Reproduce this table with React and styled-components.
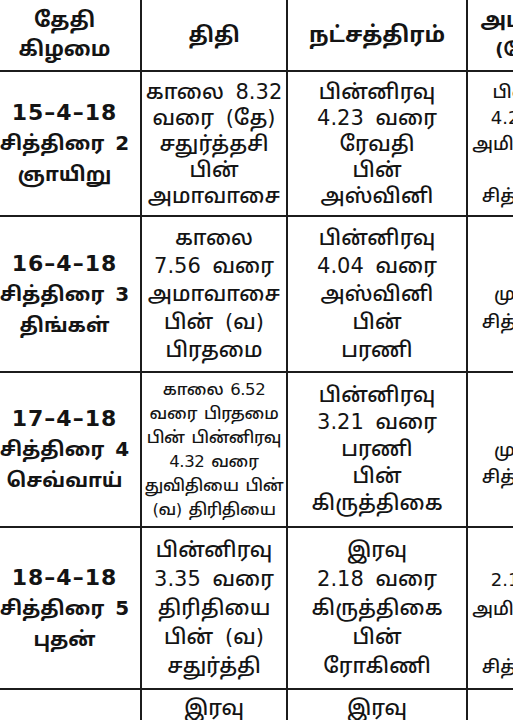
import styled, { createGlobalStyle } from 'styled-components';

const GlobalStyle = createGlobalStyle`
    html, body {
        margin: 0;
        padding: 0;
        background: #fff;
    }
    body {
        font-family: "DejaVu Sans", "Noto Sans Tamil", "Lohit Tamil", "Noto Sans", sans-serif;
        color: #141414;
    }
`;

const Page = styled.div`
    width: 513px;
    height: 720px;
    overflow: hidden;
    background: #fff;
`;

const Table = styled.div`
    margin-left: -11px;
    width: 632px;
`;

const Row = styled.div`
    display: grid;
    grid-template-columns: 153px 146px 180px 151px;
    height: ${p => p.h}px;
    border-bottom: 2px solid #1c1c1c;
    box-sizing: border-box;
`;

const Cell = styled.div`
    display: flex;
    flex-direction: column;
    align-items: center;
    justify-content: center;
    border-right: 2px solid #1c1c1c;
    text-align: center;
    white-space: nowrap;
    font-size: ${p => p.size || 21}px;
    line-height: ${p => p.lh || 26}px;
    font-weight: ${p => (p.bold ? 700 : 500)};
    letter-spacing: ${p => p.ls || 0}px;
    word-spacing: ${p => (p.ws === undefined ? 5 : p.ws)}px;
`;

const DateLine = styled.span`
    font-size: ${p => (p.num ? 22 : 20)}px;
    letter-spacing: ${p => (p.num ? 1 : 0)}px;
    word-spacing: ${p => (p.num ? 0 : 4)}px;
`;

const rows = [
    {
        h: 145,
        date: ['15–4–18', 'சித்திரை 2', 'ஞாயிறு'],
        thithi: ['காலை 8.32', 'வரை (தே)', 'சதுர்த்தசி', 'பின்', 'அமாவாசை'],
        star: ['பின்னிரவு', '4.23 வரை', 'ரேவதி', 'பின்', 'அஸ்வினி'],
        yogam: ['பின்னிரவு', '4.23 வரை', 'அமிர்தயோகம்', 'பின்', 'சித்தயோகம்'],
    },
    {
        h: 156,
        date: ['16–4–18', 'சித்திரை 3', 'திங்கள்'],
        thithi: ['காலை', '7.56 வரை', 'அமாவாசை', 'பின் (வ)', 'பிரதமை'],
        thLh: 28,
        star: ['பின்னிரவு', '4.04 வரை', 'அஸ்வினி', 'பின்', 'பரணி'],
        starLh: 28,
        yogam: ['நாள்', 'முழுவதும்', 'சித்தயோகம்'],
    },
    {
        h: 155,
        date: ['17–4–18', 'சித்திரை 4', 'செவ்வாய்'],
        thithi: ['காலை 6.52', 'வரை பிரதமை', 'பின் பின்னிரவு', '4.32 வரை', 'துவிதியை பின்', '(வ) திரிதியை'],
        thSize: 16.5,
        thLh: 24,
        thLs: -0.4,
        thWs: 2,
        star: ['பின்னிரவு', '3.21 வரை', 'பரணி', 'பின்', 'கிருத்திகை'],
        starLh: 27,
        yogam: ['நாள்', 'முழுவதும்', 'சித்தயோகம்'],
    },
    {
        h: 162,
        date: ['18–4–18', 'சித்திரை 5', 'புதன்'],
        thithi: ['பின்னிரவு', '3.35 வரை', 'திரிதியை', 'பின் (வ)', 'சதுர்த்தி'],
        thLh: 29,
        star: ['இரவு', '2.18 வரை', 'கிருத்திகை', 'பின்', 'ரோகிணி'],
        starLh: 29,
        yogam: ['இரவு', '2.18 வரை', 'அமிர்தயோகம்', 'பின்', 'சித்தயோகம்'],
    },
    {
        h: 150,
        date: ['19–4–18', 'சித்திரை 6', 'வியாழன்'],
        thithi: ['இரவு', '1.02 வரை', 'சதுர்த்தி', 'பின் (வ)', 'பஞ்சமி'],
        thLh: 28,
        star: ['இரவு', '12.50 வரை', 'ரோகிணி', 'பின்', 'மிருகசீரிஷம்'],
        starLh: 28,
        yogam: ['நாள்', 'முழுவதும்', 'சித்தயோகம்'],
    },
];

const Lines = ({ items }) => items.map((t, i) => <span key={i}>{t}</span>);

export default function App() {
    return (
        <Page>
            <GlobalStyle />
            <Table>
                <Row h={72}>
                    <Cell bold size={21} lh={29}>
                        <Lines items={['தேதி', 'கிழமை']} />
                    </Cell>
                    <Cell bold size={21}>திதி</Cell>
                    <Cell bold size={22}>நட்சத்திரம்</Cell>
                    <Cell bold size={21} lh={29}>
                        <span>அமிர்தாதி</span>
                        <span style={{ fontSize: 18 }}>(யோகம்)</span>
                    </Cell>
                </Row>
                {rows.map((r, i) => (
                    <Row key={i} h={r.h}>
                        <Cell bold lh={31}>
                            {r.date.map((t, j) => (
                                <DateLine key={j} num={j === 0}>{t}</DateLine>
                            ))}
                        </Cell>
                        <Cell size={r.thSize} lh={r.thLh} ls={r.thLs} ws={r.thWs}>
                            <Lines items={r.thithi} />
                        </Cell>
                        <Cell lh={r.starLh}>
                            <Lines items={r.star} />
                        </Cell>
                        <Cell size={18} lh={r.starLh || 26}>
                            <Lines items={r.yogam} />
                        </Cell>
                    </Row>
                ))}
            </Table>
        </Page>
    );
}
